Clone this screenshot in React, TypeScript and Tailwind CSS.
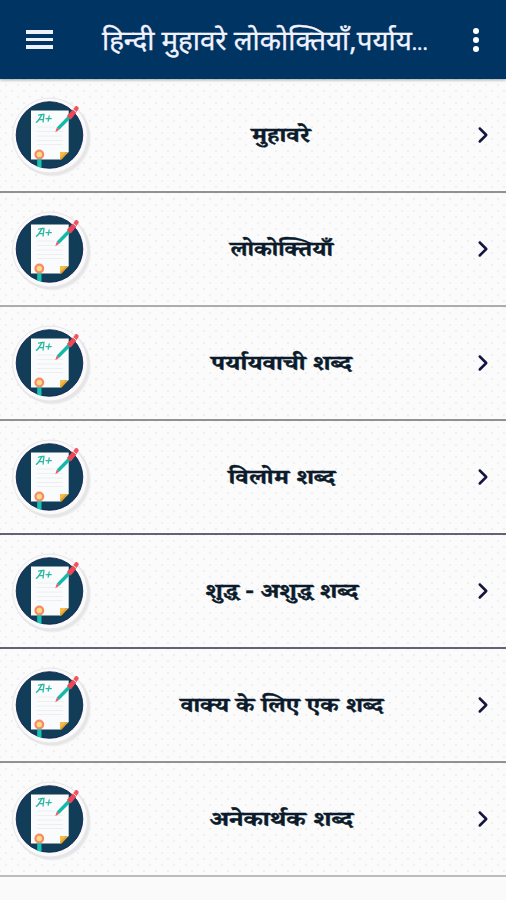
import { ChevronRight } from 'lucide-react';

const topics = [
  { id: 1, title: 'मुहावरे', line: 'bg-[#929292]', stretch: 'scale-x-[1.22]' },
  { id: 2, title: 'लोकोक्तियाँ', line: 'bg-[#adadad]', stretch: 'scale-x-[1.15]' },
  { id: 3, title: 'पर्यायवाची शब्द', line: 'bg-[#929292]', stretch: 'scale-x-[1.22]' },
  { id: 4, title: 'विलोम शब्द', line: 'bg-[#666276]', stretch: 'scale-x-[1.22]' },
  { id: 5, title: 'शुद्ध - अशुद्ध शब्द', line: 'bg-[#666276]', stretch: 'scale-x-[1.2]' },
  { id: 6, title: 'वाक्य के लिए एक शब्द', line: 'bg-[#929292]', stretch: 'scale-x-[1.18]' },
  { id: 7, title: 'अनेकार्थक शब्द', line: 'bg-[#bcbcbc]', stretch: 'scale-x-[1.25]' },
];

function PaperIcon() {
  return (
    <svg width="84" height="84" viewBox="0 0 84 84" className="mt-1 shrink-0">
      <circle cx="43.5" cy="43" r="38.5" fill="#f1f1f2" />
      <circle cx="42.5" cy="42" r="38.5" fill="#e6e6e8" />
      <circle cx="41" cy="40.5" r="37.5" fill="#fafafa" stroke="#e8e8ea" strokeWidth="1" />
      <circle cx="40.5" cy="40" r="33.3" fill="#123d59" stroke="#06164a" strokeWidth="0.8" />
      <path d="M22 15.5h37.7v41.5l-8 7.5H22z" fill="#fafbfc" />
      <path d="M51 57h8.2l-6.5 7.500H51z" fill="#e9a22c" />
      <path d="M51 57h6l-6 6z" fill="#f6bb4a" />
      <path d="M28 32h18M28 36.500h26M28 41h26M28 45.500h26M28 49.500h26" stroke="#eceef0" strokeWidth="1" />
      <path
        d="M27.300 27.300c2.700-1.300 4.200-6 5.700-7.800h2l-.9 7.500M29.800 24.600h4.600M29.500 20.300c1.500-.8 3.500-1 5.500-.8M37 23.600h5.300M40.200 21l-1 5.200"
        fill="none"
        stroke="#2bb8a2"
        strokeWidth="1.300"
        strokeLinecap="round"
      />
      <path d="M28.200 63h4.300v9.800l-4.300-1z" fill="#18c2b2" />
      <circle cx="30.300" cy="59.500" r="4.900" fill="#f78b61" />
      <circle cx="30.300" cy="59.500" r="2.700" fill="#ffd98a" />
      <path d="M46.300 37.300l1.500-4.800 2.500 2.300z" fill="#ee5a68" />
      <path d="M47.800 32.500L58.700 21.300l2.500 2.400-10.900 11.100z" fill="#16b8aa" />
      <path d="M57.800 21l6-6.500 3.500 3.200-5.500 6.700z" fill="#ed4655" />
      <path d="M64.300 13.900l2.200-2.600c1.200-1.200 4 1.300 3 2.700l-2 3z" fill="#f15363" />
    </svg>
  );
}

export default function App() {
  return (
    <div className="flex h-[900px] w-[506px] flex-col overflow-hidden bg-[#fafafa] font-['Noto_Sans','Noto_Sans_Devanagari',sans-serif]">
      <header className="z-10 flex h-[79px] shrink-0 items-center bg-[#003462] pl-[26px] pr-[27px] text-[#f2f2ff] shadow-[0_1px_3px_rgba(0,0,0,0.35)]">
        <button className="flex w-[27px] flex-col gap-1" aria-label="Menu">
          <span className="h-[3.5px] bg-[#f0f0fa]" />
          <span className="h-[3.5px] bg-[#f0f0fa]" />
          <span className="h-[3.5px] bg-[#f0f0fa]" />
        </button>
        <h1 className="ml-[49px] w-[326px] whitespace-nowrap pt-0.5 text-[27.7px] leading-10 [-webkit-text-stroke:0.3px_#f2f2ff]">
          हिन्दी मुहावरे लोकोक्तियाँ,पर्याय<span className="text-[20px]">...</span>
        </h1>
        <button className="ml-auto flex flex-col gap-[3px]" aria-label="More">
          <span className="size-1.5 rounded-full bg-white" />
          <span className="size-1.5 rounded-full bg-white" />
          <span className="size-1.5 rounded-full bg-white" />
        </button>
      </header>

      <main>
        {topics.map((topic) => (
          <div key={topic.id}>
            <div className="flex h-[112px] items-center bg-[#fbfbfb] bg-[radial-gradient(circle,#efefef_1px,transparent_1.5px),radial-gradient(circle,#efefef_1px,transparent_1.5px)] bg-size-[12px_12px] bg-position-[0_0,6px_6px] pl-[9px] pr-[10px]">
              <PaperIcon />
              <div className="flex-1 pt-[7px] text-center">
                <span
                  className={`inline-block whitespace-nowrap font-['Noto_Serif_Devanagari','Noto_Serif',serif] text-[21px] font-bold text-[#0b1b2b] [-webkit-text-stroke:0.4px_#0b1b2b] ${topic.stretch}`}
                >
                  {topic.title}
                </span>
              </div>
              <ChevronRight size={26} strokeWidth={2.3} className="text-[#15153f]" />
            </div>
            <div className={`h-[2px] ${topic.line}`} />
          </div>
        ))}
      </main>
    </div>
  );
}
